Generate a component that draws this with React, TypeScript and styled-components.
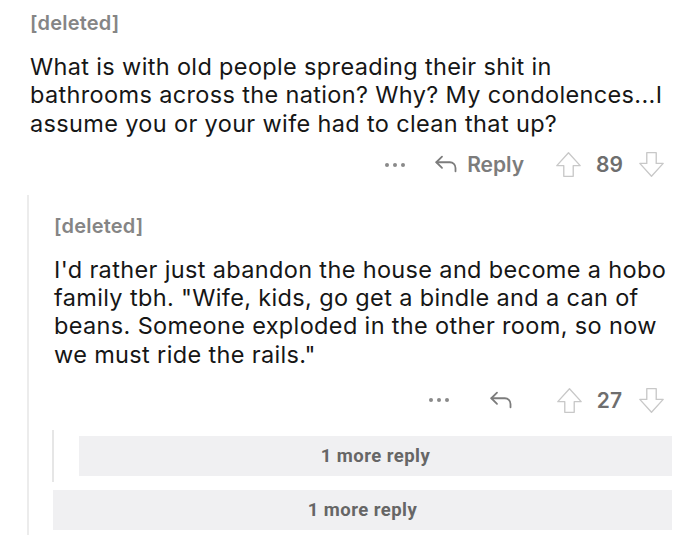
import styled, { createGlobalStyle } from "styled-components";

const GlobalStyle = createGlobalStyle`
  html, body {
    margin: 0;
    padding: 0;
    background: #ffffff;
  }
  body {
    font-family: Inter, "Noto Sans", sans-serif;
    -webkit-font-smoothing: antialiased;
  }
`;

const Page = styled.div`
  width: 700px;
  height: 535px;
  overflow: hidden;
  padding: 10px 28px 0 30px;
  box-sizing: border-box;
  display: flex;
  flex-direction: column;
`;

const Comment = styled.div`
  display: flex;
  flex-direction: column;
`;

const Author = styled.div`
  font-size: 20px;
  font-weight: 600;
  color: #858585;
  line-height: 26px;
  letter-spacing: 0.2px;
`;

const Body = styled.p`
  margin: 17px 0 0;
  font-size: 23.5px;
  line-height: 28.3px;
  color: #161616;
  letter-spacing: 0.35px;
`;

const Actions = styled.div<{ $top: number }>`
  display: flex;
  justify-content: flex-end;
  align-items: center;
  height: 30px;
  margin-top: ${(p) => p.$top}px;
  padding-right: 7px;
  color: #7a7a7a;
`;

const Dots = styled.span<{ $gap: number }>`
  display: flex;
  gap: 4px;
  margin-right: ${(p) => p.$gap}px;

  & > i {
    width: 4px;
    height: 4px;
    border-radius: 50%;
    background: #8a8a8a;
  }
`;

const ReplyBtn = styled.span<{ $gap: number }>`
  display: flex;
  align-items: center;
  gap: 7px;
  font-size: 21px;
  font-weight: 600;
  color: #7c7c7c;
  margin-right: ${(p) => p.$gap}px;
`;

const Score = styled.span<{ $l: number; $r: number }>`
  font-size: 21px;
  font-weight: 600;
  color: #6e6e6e;
  margin: 0 ${(p) => p.$r}px 0 ${(p) => p.$l}px;
`;

const Thread = styled.div`
  flex: 1;
  margin: 15px 0 0 -3px;
  border-left: 2px solid #ececec;
  padding: 18px 0 0 25px;
  display: flex;
  flex-direction: column;
`;

const Nested = styled.div`
  margin-top: 15px;
  margin-left: -2px;
  border-left: 2px solid #e6e6e6;
  padding: 6px 0 6px 25px;
`;

const MoreReplies = styled.div<{ $l?: number; $t?: number }>`
  height: 40px;
  flex-shrink: 0;
  background: #f0f0f2;
  display: flex;
  align-items: center;
  justify-content: center;
  font-family: Roboto, "Liberation Sans", sans-serif;
  font-size: 18.5px;
  font-weight: 700;
  letter-spacing: 0.45px;
  color: #666666;
  margin-left: ${(p) => p.$l ?? 0}px;
  margin-top: ${(p) => p.$t ?? 0}px;
`;

const ReplyIcon = () => (
  <svg width="27" height="27" viewBox="0 0 24 24" fill="none" stroke="#7c7c7c" strokeWidth="1.6" strokeLinecap="round" strokeLinejoin="round">
    <polyline points="8 15 3 10 8 5" />
    <path d="M3 10h12a5 5 0 0 1 5 5v3" />
  </svg>
);

const Arrow = ({ down }: { down?: boolean }) => (
  <svg width="27" height="27" viewBox="0 0 24 24" fill="none" stroke="#c8c8c8" strokeWidth="1.2" strokeLinejoin="round"
    style={down ? { transform: "rotate(180deg)" } : undefined}>
    <path d="M7.8 22.5v-9.5H1.6L12 1.6 22.4 13h-6.2v9.5z" />
  </svg>
);

export default function App() {
  return (
    <>
      <GlobalStyle />
      <Page>
        <Comment>
          <Author>[deleted]</Author>
          <Body>
            What is with old people spreading their shit in bathrooms across the nation? Why? My condolences...I assume you or your wife had to clean that up?
          </Body>
          <Actions $top={12}>
            <Dots $gap={28}><i /><i /><i /></Dots>
            <ReplyBtn $gap={31}><ReplyIcon />Reply</ReplyBtn>
            <Arrow />
            <Score $l={14} $r={15}>89</Score>
            <Arrow down />
          </Actions>
        </Comment>
        <Thread>
          <Author>[deleted]</Author>
          <Body>
            I'd rather just abandon the house and become a hobo family tbh. "Wife, kids, go get a bindle and a can of beans. Someone exploded in the other room, so now we must ride the rails."
          </Body>
          <Actions $top={16}>
            <Dots $gap={39}><i /><i /><i /></Dots>
            <ReplyBtn $gap={41}><ReplyIcon /></ReplyBtn>
            <Arrow />
            <Score $l={14} $r={16}>27</Score>
            <Arrow down />
          </Actions>
          <Nested>
            <MoreReplies>1 more reply</MoreReplies>
          </Nested>
          <MoreReplies $l={-1} $t={8}>1 more reply</MoreReplies>
        </Thread>
      </Page>
    </>
  );
}
